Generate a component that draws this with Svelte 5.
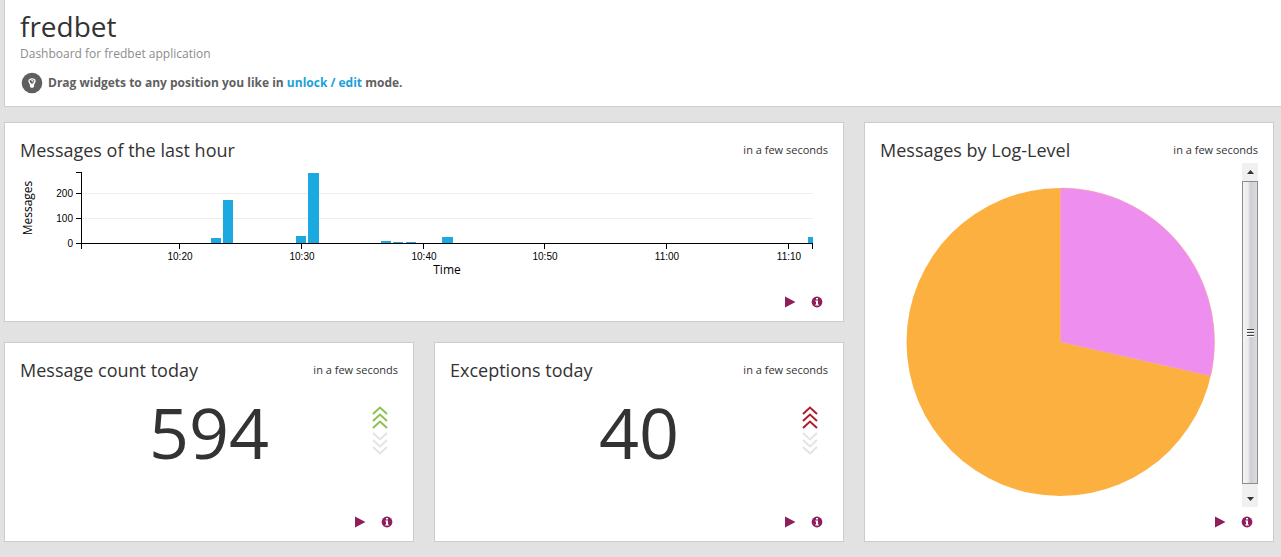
<script>
  const ticks = [
    { x: 159, label: '10:20' },
    { x: 281, label: '10:30' },
    { x: 403, label: '10:40' },
    { x: 524, label: '10:50' },
    { x: 646, label: '11:00' },
    { x: 768, label: '11:10' }
  ];
  const levels = [
    { y: 31, label: '200' },
    { y: 56, label: '100' },
    { y: 81, label: '0' }
  ];
  const bars = [
    { x: 191, w: 10, h: 5 },
    { x: 203, w: 10, h: 43 },
    { x: 276, w: 10, h: 7 },
    { x: 288, w: 11, h: 70 },
    { x: 361, w: 10, h: 2 },
    { x: 373, w: 10, h: 1 },
    { x: 386, w: 10, h: 1 },
    { x: 422, w: 11, h: 6 },
    { x: 788, w: 5, h: 6 }
  ];
  const counters = [
    { title: 'Message count today', value: 594, color: '#8cc152' },
    { title: 'Exceptions today', value: 40, color: '#ad1e2d' }
  ];
</script>

{#snippet head(title)}
  <header class="head">
    <h2>{title}</h2>
    <span>in a few seconds</span>
  </header>
{/snippet}

{#snippet actions()}
  <footer class="actions">
    <button type="button" aria-label="Play">
      <svg width="12" height="12" viewBox="0 0 12 12"><path d="M1 .5v11L11.500 6z" fill="#8e1f5b" /></svg>
    </button>
    <button type="button" aria-label="Info">
      <svg width="12" height="12" viewBox="0 0 12 12">
        <circle cx="6" cy="6" r="5.4" fill="#8e1f5b" />
        <path d="M5 2h2v1.6H5zM4.2 4.6H7v3.8h.9v1H4.2v-1H5V5.6h-.8z" fill="#fff" />
      </svg>
    </button>
  </footer>
{/snippet}

<div class="page">
  <header class="intro">
    <h1>fredbet</h1>
    <p class="sub">Dashboard for fredbet application</p>
    <p class="hint">
      <svg width="22" height="22" viewBox="0 0 22 22" aria-hidden="true">
        <circle cx="11" cy="11" r="10.3" fill="#5f5f5f" />
        <path d="M9.500 12.500c0-1.300-1.500-1.800-1.500-3.500 0-1.400 1.300-2.100 3-2.100s3 .7 3 2.100c0 1.700-1.500 2.200-1.500 3.500z" fill="none" stroke="#fff" stroke-width="1.300" />
        <path d="M10.200 8.600h1.800v1.800" fill="none" stroke="#fff" stroke-width=".9" />
        <path d="M9 11.800h4v2.600l-1 1.400h-2l-1-1.400z" fill="#fff" />
      </svg>
      <span>Drag widgets to any position you like in <a href="#edit">unlock / edit</a> mode.</span>
    </p>
  </header>

  <main class="grid">
    <section class="card wide">
      {@render head('Messages of the last hour')}
      <svg class="chart" viewBox="0 0 808 116" role="img" aria-label="Messages of the last hour">
        <g stroke="#eee" shape-rendering="crispEdges">
          <path d="M62 31.500H793M62 56.500H793" />
        </g>
        {#each bars as bar}
          <rect x={bar.x} y={81 - bar.h} width={bar.w} height={bar.h} fill="#1ba9df" />
        {/each}
        <path d="M56 10.500H61.500V87M56 81.500H792.500V87" fill="none" stroke="#000" shape-rendering="crispEdges" />
        {#each levels as level}
          <path d="M56 {level.y + 0.5}h5" stroke="#000" shape-rendering="crispEdges" />
          <text class="tick" x="53" y={level.y + 4} text-anchor="end">{level.label}</text>
        {/each}
        {#each ticks as tick}
          <path d="M{tick.x + 0.5} 82v5" stroke="#000" shape-rendering="crispEdges" />
          <text class="tick" x={tick.x + 1} y="98" text-anchor="middle">{tick.label}</text>
        {/each}
        <text class="axis" x="427" y="112" text-anchor="middle">Time</text>
        <text class="axis" transform="translate(12 46) rotate(-90)" text-anchor="middle">Messages</text>
      </svg>
      {@render actions()}
    </section>

    <section class="card tall">
      {@render head('Messages by Log-Level')}
      <div class="scroller">
        <svg class="pie" viewBox="0 0 362 344" role="img" aria-label="Messages by Log-Level">
          <circle cx="180.500" cy="179" r="154" fill="#fbb040" />
          <path d="M180.500 179V25A154 154 0 0 1 330.700 213z" fill="#ee8eee" stroke="#f5b0b4" stroke-width=".5" />
        </svg>
        <div class="bar" aria-hidden="true">
          <svg width="16" height="18" viewBox="0 0 16 18"><path d="M5 11l3.500-4 3.500 4z" fill="#333" /></svg>
          <div class="thumb"><i></i><i></i><i></i></div>
          <svg width="16" height="23" viewBox="0 0 16 23"><path d="M5 13h7l-3.500 4z" fill="#333" /></svg>
        </div>
      </div>
      {@render actions()}
    </section>

    {#each counters as counter}
      <section class="card">
        {@render head(counter.title)}
        <div class="counter">
          <strong>{counter.value}</strong>
          <svg width="16" height="54" viewBox="0 0 16 54" fill="none" stroke-width="2" aria-hidden="true">
            <path d="M1 9l7-6.500L15 9M1 16l7-6.500 7 6.500M1 23l7-6.500 7 6.500" stroke={counter.color} />
            <path d="M1 28l7 6.500 7-6.500M1 35l7 6.500 7-6.500M1 42l7 6.500 7-6.500" stroke="#e4e4e4" />
          </svg>
        </div>
        {@render actions()}
      </section>
    {/each}
  </main>
</div>

<style>
  :global(body) {
    margin: 0;
    background: #e2e2e2;
  }
  .page {
    font-family: 'Open Sans', sans-serif;
    color: #333;
  }
  h1, h2, p {
    margin: 0;
    font-weight: 400;
  }
  .intro {
    margin-left: 4px;
    padding: 8px 15px 12px;
    background: #fff;
    border: 1px solid #ccc;
    border-width: 0 0 1px 1px;
  }
  h1 {
    font-size: 28px;
    line-height: 36px;
  }
  .sub {
    font-size: 12px;
    line-height: 20px;
    color: #8c8c8c;
  }
  .hint {
    display: flex;
    align-items: center;
    gap: 5px;
    padding: 8px 1px 0;
    font-size: 12px;
    line-height: 20px;
    font-weight: 700;
    color: #5f5f5f;
  }
  .hint a {
    color: #1ba1d9;
    text-decoration: none;
  }
  .grid {
    display: grid;
    grid-template-columns: repeat(3, minmax(0, 1fr));
    grid-auto-rows: minmax(200px, auto);
    gap: 20px;
    padding: 15px 7px 15px 4px;
  }
  .card {
    box-sizing: border-box;
    display: flex;
    flex-direction: column;
    padding: 15px 15px 13px;
    background: #fff;
    border: 1px solid #ccc;
  }
  .wide {
    grid-column: span 2;
  }
  .tall {
    grid-column: 3;
    grid-row: 1 / span 2;
  }
  .head {
    display: flex;
    align-items: center;
    justify-content: space-between;
    line-height: 24px;
  }
  h2 {
    font-size: 18px;
  }
  .head span {
    font-size: 11px;
  }
  .chart {
    display: block;
    width: 100%;
  }
  .tick {
    font: 10px 'Liberation Sans', Arial, sans-serif;
    fill: #000;
  }
  .axis {
    font-size: 12px;
    fill: #000;
  }
  .actions {
    display: flex;
    justify-content: flex-end;
    gap: 15px;
    margin-top: auto;
    padding-right: 5px;
  }
  button {
    display: flex;
    padding: 0;
    border: 0;
    background: none;
    cursor: pointer;
  }
  .scroller {
    display: flex;
    padding-top: 1px;
  }
  .pie {
    flex: 1;
    min-width: 0;
  }
  .bar {
    display: flex;
    flex-direction: column;
    width: 16px;
    background: #f0f0f0;
  }
  .thumb {
    flex: 1;
    display: flex;
    flex-direction: column;
    align-items: center;
    justify-content: center;
    gap: 1px;
    border: 1px solid #8c8c8c;
    background: linear-gradient(90deg, #f4f4f4, #ececee 35%, #cfcfd3 55%, #dcdce0);
  }
  .thumb i {
    width: 7px;
    height: 1px;
    background: #444;
    border-bottom: 1px solid #fff;
  }
  .counter {
    display: grid;
    grid-template-columns: 36px 1fr 36px;
    align-items: center;
    justify-items: center;
    padding-top: 18px;
  }
  .counter strong {
    grid-column: 2;
    font-size: 70px;
    line-height: 64px;
    font-weight: 400;
  }
</style>
